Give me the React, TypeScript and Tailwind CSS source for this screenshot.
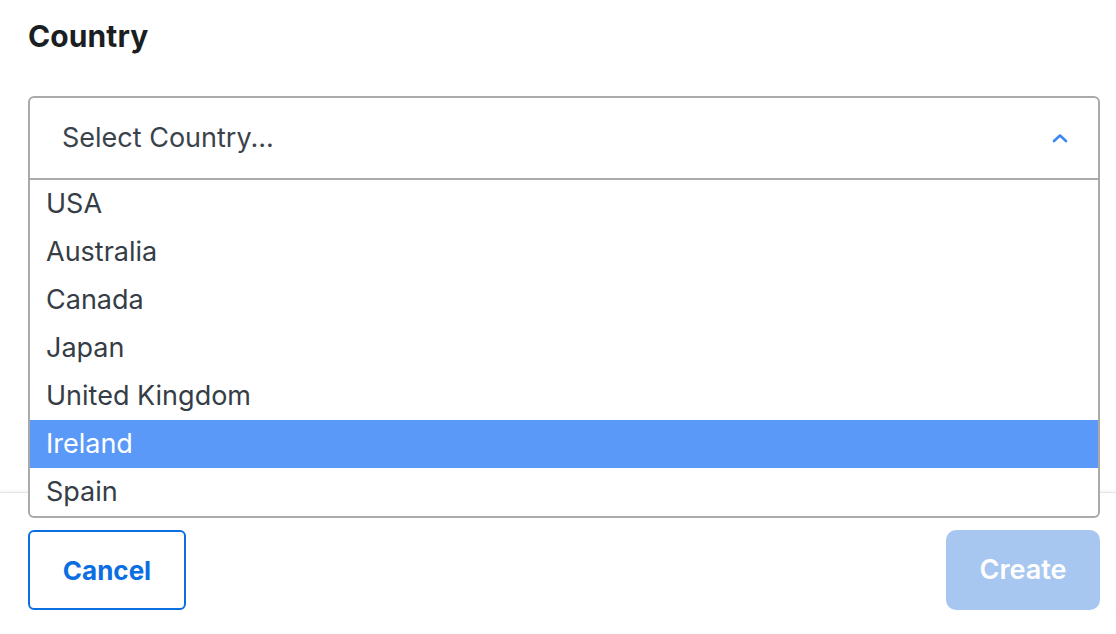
import { FC } from 'react';

const countries = ['USA', 'Australia', 'Canada', 'Japan', 'United Kingdom', 'Ireland', 'Spain'];
const selected = 'Ireland';

const ChevronUp: FC = () => (
  <svg width="16" height="10" viewBox="0 0 16 10" fill="none" className="mr-[30px]">
    <path d="M2 8l6-5.5L14 8" stroke="#3d87f0" strokeWidth="2.6" strokeLinecap="round" strokeLinejoin="round" />
  </svg>
);

export default function App() {
  return (
    <div className="h-[634px] w-[1116px] overflow-hidden bg-white font-['Inter',sans-serif] antialiased">
      <div className="pl-7 pr-4 pt-[17px]">
        <h2 className="text-[30px] font-bold leading-[38px] tracking-[0.1px] text-[#1b1f23]">Country</h2>
      </div>

      <div className="relative ml-7 mr-4 mt-[41px]">
        <button className="flex h-[84px] w-full items-center justify-between rounded-t-md border-2 border-[#aaaaaa] bg-white pl-8 text-left">
          <span className="text-[27px] text-[#3a424c]">Select Country...</span>
          <ChevronUp />
        </button>
        <ul className="absolute left-0 right-0 top-full z-10 rounded-b-md border-2 border-t-0 border-[#aaaaaa] bg-white">
          {countries.map((c) => (
            <li
              key={c}
              className={
                c === selected
                  ? 'flex h-12 items-center bg-[#5a99f8] px-4 text-[27px] text-white'
                  : 'flex h-12 items-center px-4 text-[27px] text-[#353d46]'
              }
            >
              {c}
            </li>
          ))}
        </ul>
      </div>

      <div className="h-[312px]" />

      <footer className="border-t border-[#e6e6e6] shadow-[0_-1px_3px_rgba(0,0,0,0.06)]">
        <div className="flex items-center justify-between pl-7 pr-4 pt-[37px]">
          <button className="h-20 w-[158px] rounded-md border-2 border-[#0b6ee1] text-[26px] font-bold text-[#0b6ee1]">
            Cancel
          </button>
          <button className="h-20 w-[154px] rounded-[10px] bg-[#a7c7f1] text-[27px] font-semibold text-white">
            Create
          </button>
        </div>
      </footer>
    </div>
  );
}
